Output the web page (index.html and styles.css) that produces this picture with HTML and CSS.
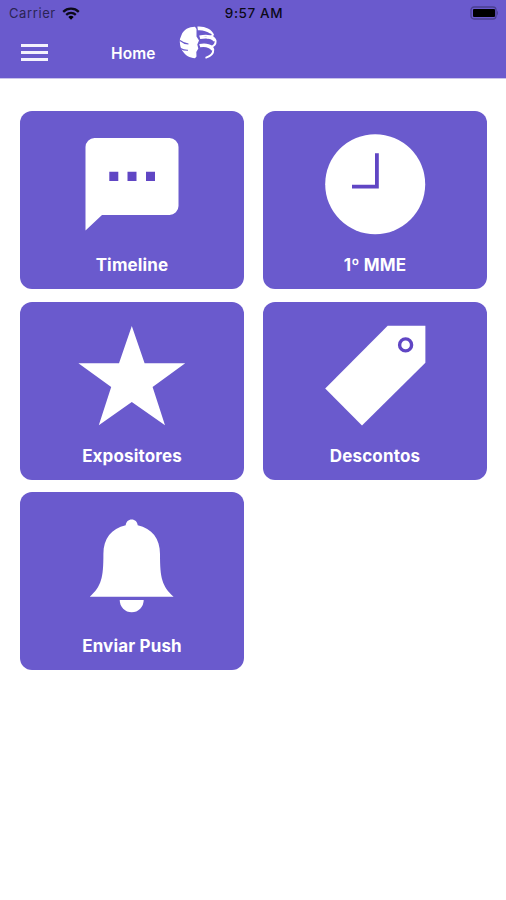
FILE: index.html
```html
<!doctype html>
<html lang="pt-BR">
  <head>
    <meta charset="UTF-8" />
    <meta name="viewport" content="width=device-width, initial-scale=1.0" />
    <title>Home</title>
    <link rel="stylesheet" href="styles.css">
  </head>
  <body>
    <header class="header">
      <div class="status-bar">
        <div class="status-left">
          <span class="carrier">Carrier</span>
          <svg class="wifi" viewBox="0 0 18 13">
            <path class="wifi-arc" d="M1.2 4.8a11.2 11.2 0 0 1 15.6 0M4.2 7.8a7 7 0 0 1 9.6 0" />
            <path d="M9 12.8 6.3 10.1a3.9 3.9 0 0 1 5.4 0z" />
          </svg>
        </div>
        <span class="time">9:57 AM</span>
        <div class="status-right">
          <svg class="battery" viewBox="0 0 29 14">
            <rect class="battery-case" x="1" y="1" width="25" height="12" rx="3" />
            <rect x="3" y="3" width="22" height="8" rx="1" />
            <path class="battery-tip" d="M27 4.5q2 2.5 0 5z" />
          </svg>
        </div>
      </div>

      <nav class="toolbar">
        <button class="menu-btn" aria-label="Menu">
          <span></span>
          <span></span>
          <span></span>
        </button>
        <h1>Home</h1>
        <svg class="logo" viewBox="0 0 38 34">
          <path d="M16 .8C10 1 4.500 3.500 2.500 9Q.5 13 .8 16 1.200 22 3.500 25C6.500 29.500 10.500 31.800 16 32.200L17.500 30.500 17.300 26 19.300 22.500 18.300 18.500 20 14.500 17.500 10.500 17.500 3z" />
          <path class="logo-gap" d="M1 14.500Q5 17.800 9.500 18M1.500 22.500Q5 24.500 9 24.300" />
          <path class="logo-line" d="M18.500 1.500C26 1 32.500 4 34.300 9.500M18.800 3.300Q26 2.700 32 7" />
          <path class="logo-line" d="M20.500 10.500C28 8.500 35.500 10 36.500 14.500 37 17.500 35.500 19.800 32 21M21 12Q32 10 35.500 15" />
          <path class="logo-line" d="M20.500 19C27 17.500 33.500 19.300 34.300 23.500 34.500 27.500 31 30.500 26.500 31.800M21 20.300Q30 19 33.300 24" />
          <path class="logo-line" d="M34 9.500Q32.500 11 28 11.500" />
        </svg>
      </nav>
    </header>

    <main class="grid">
      <a class="card">
        <svg class="card-icon" viewBox="0 0 120 104">
          <path d="M22.500 7h75a9 9 0 0 1 9 9v59a9 9 0 0 1-9 9H30L13.500 99.500V16a9 9 0 0 1 9-9z" />
          <path class="cut" d="M37.300 40.800h9v9.200h-9zM55.500 40.800h9v9.200h-9zM74 40.800h9v9.200h-9z" />
        </svg>
        <span>Timeline</span>
      </a>

      <a class="card">
        <svg class="card-icon" viewBox="0 0 120 104">
          <circle cx="60.200" cy="53.200" r="50" />
          <path class="cut" d="M60 22.300h3.800v35.200H37v-3.700h23z" />
        </svg>
        <span>1º MME</span>
      </a>

      <a class="card">
        <svg class="card-icon" viewBox="0 0 120 104">
          <path d="M59.800 3.900 72.600 41.200H113.200L80.600 64.900 93 103.200 59.800 79.900 26.800 103.200 39.200 64.900 6.400 41.200H47z" />
        </svg>
        <span>Expositores</span>
      </a>

      <a class="card">
        <svg class="card-icon" viewBox="0 0 120 104">
          <path d="M72.700 3.700h37.700v37L47 103.500 10.200 66.500z" />
          <circle class="cut-ring" cx="90.600" cy="22.900" r="6" />
        </svg>
        <span>Descontos</span>
      </a>

      <a class="card">
        <svg class="card-icon" viewBox="0 0 120 104">
          <path d="M59.700 7.500c3.300 0 5.700 2.300 6 5.800C80 16.500 88 26.500 88 42c0 24 2 32 13.600 42.800H17.800C29.400 74 31.400 66 31.400 42c0-15.500 8-25.500 22.300-28.700.3-3.500 2.700-5.800 6-5.800z" />
          <path d="M47.700 88h24a12 12.200 0 0 1-24 0z" />
        </svg>
        <span>Enviar Push</span>
      </a>
    </main>
  </body>
</html>
```
FILE: styles.css
```css
* {
  margin: 0;
  padding: 0;
  box-sizing: border-box;
}

body {
  font-family: Inter, "Liberation Sans", sans-serif;
  min-height: 100vh;
  background: #fff;
}

.header {
  height: 79px;
  background: #6a5acd;
  border-bottom: 1px solid #c9c3eb;
}

.status-bar {
  display: grid;
  grid-template-columns: 1fr auto 1fr;
  align-items: center;
  height: 26px;
  padding: 0 7px 0 9px;
  font-size: 13px;
  color: #0c0a18;
}

.status-left {
  display: flex;
  align-items: center;
  gap: 6px;
}

.carrier {
  color: #2b2454;
  letter-spacing: 0.6px;
}

.wifi {
  width: 18px;
  height: 13px;
}

.wifi-arc {
  fill: none;
  stroke: #0c0a18;
  stroke-width: 2.3;
}

.time {
  font-size: 13.5px;
  font-weight: 500;
  letter-spacing: 0.6px;
}

.status-right {
  display: flex;
  justify-content: flex-end;
}

.battery {
  width: 29px;
  height: 14px;
}

.battery-case {
  fill: none;
  stroke: #4a3f90;
  stroke-width: 1.3;
}

.battery-tip {
  fill: #4a3f90;
}

.toolbar {
  display: flex;
  align-items: flex-start;
  padding-left: 21px;
}

.menu-btn {
  display: flex;
  flex-direction: column;
  gap: 4.5px;
  width: 27px;
  margin-top: 18px;
  background: none;
  border: none;
}

.menu-btn span {
  height: 2.6px;
  background: #f4f2fd;
}

.toolbar h1 {
  margin: 18px 0 0 63px;
  width: 68px;
  font-size: 15.5px;
  line-height: 20px;
  font-weight: 600;
  letter-spacing: 0.1px;
  color: #fff;
}

.logo {
  width: 38px;
  height: 34px;
  fill: #fff;
}

.logo-line {
  fill: none;
  stroke: #fff;
  stroke-width: 1.9;
}

.logo-gap {
  fill: none;
  stroke: #6a5acd;
  stroke-width: 1.1;
}

.grid {
  display: grid;
  grid-template-columns: 224px 224px;
  gap: 12.7px 19px;
  padding: 32px 0 0 20px;
}

.card {
  display: flex;
  flex-direction: column;
  align-items: center;
  height: 178px;
  padding-top: 20px;
  background: #6a5acd;
  border-radius: 12px;
  font-size: 17px;
  line-height: 22px;
  font-weight: 700;
  letter-spacing: 0.15px;
  color: #fff;
}

.card-icon {
  width: 120px;
  height: 104px;
  margin-bottom: 19px;
  fill: #fff;
}

.card-icon .cut {
  fill: #6046c4;
}

.card-icon .cut-ring {
  fill: none;
  stroke: #6046c4;
  stroke-width: 3.4;
}
```
